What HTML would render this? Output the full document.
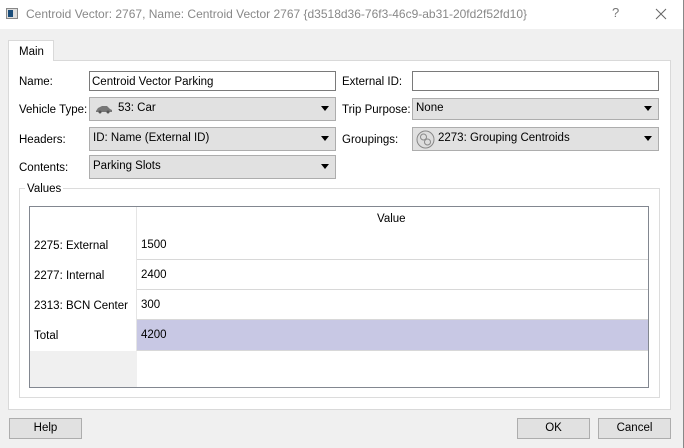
<!DOCTYPE html><html><head><style>
*{box-sizing:border-box;margin:0;padding:0}
body{width:684px;height:448px;background:#f0f0f0;font-family:"Liberation Sans",sans-serif;font-size:11.5px;color:#000;position:relative;overflow:hidden}
.a{position:absolute}
.t{position:absolute;white-space:nowrap;line-height:14px}
.inp{position:absolute;background:#fff;border:1px solid #7a7a7a}
.cb{position:absolute;background:#e1e1e1;border:1px solid #adadad}
.cb .tx{position:absolute;left:3px;top:4px;white-space:nowrap}
.cb .ar{position:absolute;right:6px;top:8px;width:0;height:0;border-left:4px solid transparent;border-right:4px solid transparent;border-top:5px solid #000}
.btn{position:absolute;background:#e1e1e1;border:1px solid #adadad;text-align:center;line-height:18px}
</style></head><body>
<div class="a" style="left:0;top:0;width:684px;height:29px;background:#fff"></div>
<div class="a" style="left:6px;top:8px;width:12px;height:11px;border:1px solid #888;background:#ddd"></div>
<div class="a" style="left:8px;top:10px;width:5px;height:7px;background:#1a4d7a"></div>
<div class="t" style="left:26px;top:7px;color:#888;font-size:12px">Centroid Vector: 2767, Name: Centroid Vector 2767 {d3518d36-76f3-46c9-ab31-20fd2f52fd10}</div>
<div class="t" style="left:612px;top:6px;color:#777;font-size:13px">?</div>
<svg class="a" style="left:655px;top:8px" width="12" height="12"><path d="M1 1L11 11M11 1L1 11" stroke="#666" stroke-width="1"/></svg>
<div class="a" style="left:683px;top:0;width:1px;height:448px;background:#888"></div>
<div class="a" style="left:8px;top:60px;width:663px;height:350px;background:#fff;border:1px solid #d9d9d9"></div>
<div class="a" style="left:8px;top:40px;width:46px;height:21px;background:#fff;border:1px solid #d9d9d9;border-bottom:none"></div>
<div class="t" style="left:19px;top:45px">Main</div>
<div class="t" style="left:19px;top:75px">Name:</div>
<div class="inp" style="left:89px;top:71px;width:247px;height:20px"><span class="t" style="left:2px;top:3px">Centroid Vector Parking</span></div>
<div class="t" style="left:19px;top:103px">Vehicle Type:</div>
<div class="cb" style="left:89px;top:97px;width:247px;height:24px"><svg class="a" style="left:5px;top:7px" width="18" height="9"><path d="M1 6 L3 3 L7 1 L12 1 L15 4 L17 5 L17 7 L1 7Z" fill="#777"/><circle cx="5" cy="7" r="1.5" fill="#555"/><circle cx="13" cy="7" r="1.5" fill="#555"/></svg><span class="tx" style="left:28px">53: Car</span><span class="ar"></span></div>
<div class="t" style="left:19px;top:133px">Headers:</div>
<div class="cb" style="left:89px;top:127px;width:247px;height:24px"><span class="tx">ID: Name (External ID)</span><span class="ar"></span></div>
<div class="t" style="left:19px;top:161px">Contents:</div>
<div class="cb" style="left:89px;top:155px;width:247px;height:24px"><span class="tx">Parking Slots</span><span class="ar"></span></div>
<div class="t" style="left:342px;top:75px">External ID:</div>
<div class="inp" style="left:412px;top:71px;width:247px;height:20px"></div>
<div class="t" style="left:342px;top:103px">Trip Purpose:</div>
<div class="cb" style="left:412px;top:98px;width:247px;height:22px"><span class="tx" style="top:3px">None</span><span class="ar" style="top:7px"></span></div>
<div class="t" style="left:342px;top:133px">Groupings:</div>
<div class="cb" style="left:412px;top:127px;width:247px;height:24px"><svg class="a" style="left:3px;top:2px" width="19" height="19"><circle cx="9.5" cy="9.5" r="8.5" fill="#ddd" stroke="#888"/><circle cx="7.5" cy="7" r="3" fill="none" stroke="#888"/><circle cx="11.5" cy="12" r="3" fill="none" stroke="#888"/></svg><span class="tx" style="left:25px">2273: Grouping Centroids</span><span class="ar"></span></div>
<div class="a" style="left:19px;top:188px;width:641px;height:210px;border:1px solid #dcdcdc"></div>
<div class="t" style="left:25px;top:182px;background:#fff;padding:0 2px">Values</div>
<div class="a" style="left:29px;top:206px;width:620px;height:182px;border:1px solid #828790;background:#fff;overflow:hidden">
 <div class="a" style="left:0;top:144px;width:107px;height:40px;background:#f0f0f0"></div>
 <div class="a" style="left:106px;top:0;width:1px;height:144px;background:#e5e5e5"></div>
 <div class="t" style="left:347px;top:5px">Value</div>
 <div class="a" style="left:107px;top:52px;width:512px;height:1px;background:#d8d8d8"></div>
 <div class="a" style="left:107px;top:82px;width:512px;height:1px;background:#d8d8d8"></div>
 <div class="a" style="left:107px;top:112px;width:512px;height:1px;background:#d8d8d8"></div>
 <div class="a" style="left:107px;top:113px;width:511px;height:30px;background:#c8c8e4"></div>
 <div class="a" style="left:107px;top:143px;width:512px;height:1px;background:#d8d8d8"></div>
 <div class="t" style="left:4px;top:32px">2275: External</div>
 <div class="t" style="left:111px;top:31px">1500</div>
 <div class="t" style="left:4px;top:62px">2277: Internal</div>
 <div class="t" style="left:111px;top:61px">2400</div>
 <div class="t" style="left:4px;top:92px">2313: BCN Center</div>
 <div class="t" style="left:111px;top:91px">300</div>
 <div class="t" style="left:4px;top:122px">Total</div>
 <div class="t" style="left:111px;top:121px">4200</div>
</div>
<div class="btn" style="left:9px;top:418px;width:73px;height:21px">Help</div>
<div class="btn" style="left:517px;top:418px;width:73px;height:21px">OK</div>
<div class="btn" style="left:598px;top:418px;width:73px;height:21px">Cancel</div>
</body></html>
